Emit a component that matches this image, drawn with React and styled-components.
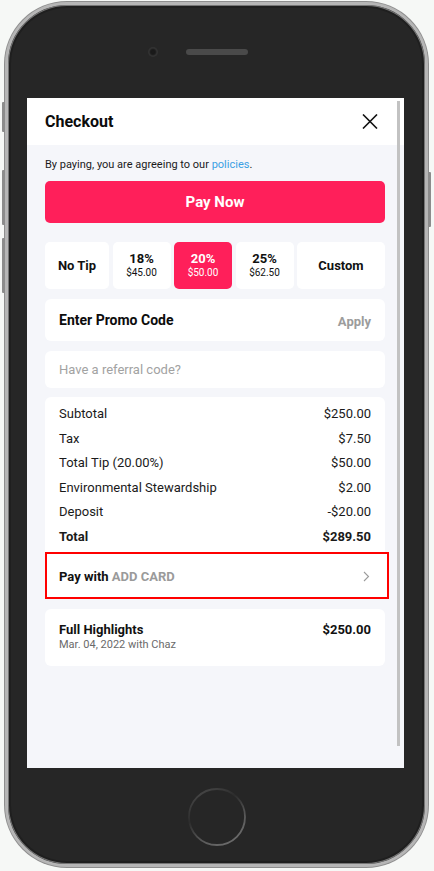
import React from "react";
import styled, { createGlobalStyle } from "styled-components";

const GlobalStyle = createGlobalStyle`
  * {
    box-sizing: border-box;
  }

  body {
    margin: 0;
    background: #f6f8f6;
    font-family: Roboto, "Liberation Sans", Arial, sans-serif;
    color: #161616;
  }
`;

const PINK = "#ff1f5a";

const tips = [
	{ id: "none", label: "No Tip" },
	{ id: "18", label: "18%", amount: "$45.00" },
	{ id: "20", label: "20%", amount: "$50.00" },
	{ id: "25", label: "25%", amount: "$62.50" },
	{ id: "custom", label: "Custom" },
];

const lines = [
	{ label: "Subtotal", value: "$250.00" },
	{ label: "Tax", value: "$7.50" },
	{ label: "Total Tip (20.00%)", value: "$50.00" },
	{ label: "Environmental Stewardship", value: "$2.00" },
	{ label: "Deposit", value: "-$20.00" },
	{ label: "Total", value: "$289.50", strong: true },
];

const CloseIcon = () => (
	<svg width="16" height="15" viewBox="0 0 16 15">
		<path d="M1 0.5 L15 14.5 M15 0.5 L1 14.5" stroke="#111" strokeWidth="1.6" fill="none" />
	</svg>
);

const Chevron = () => (
	<svg width="7" height="11" viewBox="0 0 7 11">
		<path d="M1 1 L5.5 5.5 L1 10" stroke="#9b9b9b" strokeWidth="1.1" fill="none" />
	</svg>
);

// home button: faint ring, brighter towards the lower right
const HomeRing = () => (
	<svg width="60" height="60" viewBox="0 0 60 60">
		<defs>
			<linearGradient id="ring" x1="0.2" y1="0" x2="0.8" y2="1">
				<stop offset="0" stopColor="#484848" />
				<stop offset="0.35" stopColor="#2c2c2c" />
				<stop offset="0.7" stopColor="#5a5a5a" />
				<stop offset="1" stopColor="#6e6e6e" />
			</linearGradient>
		</defs>
		<circle cx="30" cy="30" r="28" stroke="url(#ring)" strokeWidth="1.8" fill="none" />
	</svg>
);

const App = () => {
	const selectedTip = "20";

	return (
		<Page>
			<GlobalStyle />
			<Phone>
				<SideKey $side="left" $top={97} $height={30} />
				<SideKey $side="left" $top={165} $height={55} />
				<SideKey $side="left" $top={233} $height={55} />
				<SideKey $side="right" $top={167} $height={55} />

				<TopBezel>
					<Camera />
					<Speaker />
					<Balance />
				</TopBezel>

				<Screen>
					<Header>
						<Title>Checkout</Title>
						<CloseIcon />
					</Header>

					<Body>
						<Notice>
							By paying, you are agreeing to our <PolicyLink href="#">policies</PolicyLink>.
						</Notice>

						<PayButton>Pay Now</PayButton>

						<TipRow>
							{tips.map((tip) => (
								<TipCell key={tip.id} $active={tip.id === selectedTip}>
									<TipLabel>{tip.label}</TipLabel>
									{tip.amount && <TipAmount>{tip.amount}</TipAmount>}
								</TipCell>
							))}
						</TipRow>

						<PromoCard>
							<PromoTitle>Enter Promo Code</PromoTitle>
							<ApplyText>Apply</ApplyText>
						</PromoCard>

						<ReferralInput placeholder="Have a referral code?" />

						<SummaryCard>
							<SummaryLines>
								{lines.map((line) => (
									<SummaryRow key={line.label} $strong={line.strong}>
										<span>{line.label}</span>
										<span>{line.value}</span>
									</SummaryRow>
								))}
							</SummaryLines>
							<PayWithRow>
								<PayWithText>
									Pay with <AddCard>ADD CARD</AddCard>
								</PayWithText>
								<Chevron />
							</PayWithRow>
						</SummaryCard>

						<HighlightCard>
							<HighlightTop>
								<span>Full Highlights</span>
								<span>$250.00</span>
							</HighlightTop>
							<HighlightMeta>Mar. 04, 2022 with Chaz</HighlightMeta>
						</HighlightCard>
					</Body>

					<ScrollThumb />
				</Screen>

				<BottomBezel>
					<HomeRing />
				</BottomBezel>
			</Phone>
		</Page>
	);
};

export default App;

const Page = styled.div`
	width: 434px;
	height: 871px;
	padding: 2px 0 0 5px;
`;

const Phone = styled.div`
	position: relative;
	width: 423px;
	height: 865px;
	border-radius: 62px;
	background: #262626;
	border: 3px solid #b6b6b6;
	box-shadow: 0 0 0 1px #8e8e8e, inset 0 0 0 1px #767676, inset 0 0 0 3px #1f1f1f;
	display: flex;
	flex-direction: column;
`;

const SideKey = styled.div`
	position: absolute;
	top: ${(p) => p.$top}px;
	${(p) => (p.$side === "left" ? "left: -6px;" : "right: -6px;")}
	width: 3px;
	height: ${(p) => p.$height}px;
	background: #8c8c8c;
	border-radius: 1px;
`;

const TopBezel = styled.div`
	height: 93px;
	display: flex;
	align-items: center;
	justify-content: center;
	gap: 29px;
	padding-top: 1px;
`;

const Camera = styled.div`
	width: 8px;
	height: 8px;
	border-radius: 50%;
	background: #1a1a1a;
	box-shadow: 0 0 0 1px #333, inset 0 0 2px #555;
`;

const Speaker = styled.div`
	width: 62px;
	height: 6px;
	border-radius: 3px;
	background: #4a4a4a;
`;

const Balance = styled.div`
	width: 8px;
`;

const Screen = styled.div`
	position: relative;
	width: 377px;
	height: 670px;
	margin-left: 19px;
	background: #f5f6fa;
	overflow: hidden;
	display: flex;
	flex-direction: column;
`;

const Header = styled.div`
	height: 47px;
	flex-shrink: 0;
	background: #fff;
	display: flex;
	align-items: center;
	justify-content: space-between;
	padding: 0 26px 0 18px;
`;

const Title = styled.div`
	font-size: 16px;
	font-weight: 700;
	color: #0c0c0c;
`;

const Body = styled.div`
	display: flex;
	flex-direction: column;
	padding: 13px 19px 0 18px;
`;

const Notice = styled.div`
	font-size: 11px;
	line-height: 14px;
	color: #1a1a1a;
`;

const PolicyLink = styled.a`
	color: #3aa0e4;
	text-decoration: none;
`;

const PayButton = styled.button`
	margin-top: 9px;
	height: 42px;
	border: none;
	border-radius: 5px;
	background: ${PINK};
	color: #fff;
	font-family: inherit;
	font-size: 15px;
	font-weight: 700;
`;

const TipRow = styled.div`
	margin-top: 19px;
	display: grid;
	grid-template-columns: 64px 58px 58px 58px 1fr;
	gap: 3.5px;
	height: 47px;
`;

const TipCell = styled.div`
	border-radius: 5px;
	background: ${(p) => (p.$active ? PINK : "#fff")};
	color: ${(p) => (p.$active ? "#fff" : "#111")};
	display: flex;
	flex-direction: column;
	align-items: center;
	justify-content: center;
`;

const TipLabel = styled.div`
	font-size: 13px;
	font-weight: 700;
	line-height: 14px;
`;

const TipAmount = styled.div`
	font-size: 10px;
	line-height: 14px;
`;

const Card = styled.div`
	background: #fff;
	border-radius: 6px;
`;

const PromoCard = styled(Card)`
	margin-top: 10px;
	height: 42px;
	padding: 0 14px;
	display: flex;
	align-items: center;
	justify-content: space-between;
`;

const PromoTitle = styled.div`
	font-size: 14px;
	font-weight: 700;
	color: #0c0c0c;
`;

const ApplyText = styled.div`
	font-size: 13px;
	font-weight: 700;
	color: #9c9c9c;
	padding-top: 3px;
`;

const ReferralInput = styled.input`
	margin-top: 10px;
	height: 37px;
	border: none;
	border-radius: 6px;
	background: #fff;
	padding: 0 14px;
	font-family: inherit;
	font-size: 13px;
	outline: none;

	&::placeholder {
		color: #a2a2a2;
	}
`;

const SummaryCard = styled(Card)`
	margin-top: 9px;
	border-radius: 6px 6px 0 0;
`;

const SummaryLines = styled.div`
	padding: 5px 14px 2px;
`;

const SummaryRow = styled.div`
	display: flex;
	justify-content: space-between;
	font-size: 13px;
	line-height: 24.6px;
	font-weight: ${(p) => (p.$strong ? 700 : 400)};
	color: #1a1a1a;
`;

const PayWithRow = styled.div`
	width: calc(100% + 4px);
	height: 47px;
	border: 2px solid #f00;
	background: #fff;
	display: flex;
	align-items: center;
	justify-content: space-between;
	padding: 2px 17px 0 12px;
`;

const PayWithText = styled.div`
	font-size: 13px;
	font-weight: 700;
	color: #111;
`;

const AddCard = styled.span`
	color: #9a9a9a;
`;

const HighlightCard = styled(Card)`
	margin-top: 10px;
	height: 57px;
	padding: 0 14px;
	display: flex;
	flex-direction: column;
	justify-content: center;
`;

const HighlightTop = styled.div`
	display: flex;
	justify-content: space-between;
	font-size: 13px;
	font-weight: 700;
	line-height: 16px;
	color: #111;
`;

const HighlightMeta = styled.div`
	font-size: 11px;
	line-height: 14px;
	color: #6a6a6a;
`;

const ScrollThumb = styled.div`
	position: absolute;
	top: 3px;
	bottom: 22px;
	right: 4px;
	width: 3px;
	background: #c2c2c2;
`;

const BottomBezel = styled.div`
	flex: 1;
	display: flex;
	justify-content: center;
	padding-top: 19px;
`;
